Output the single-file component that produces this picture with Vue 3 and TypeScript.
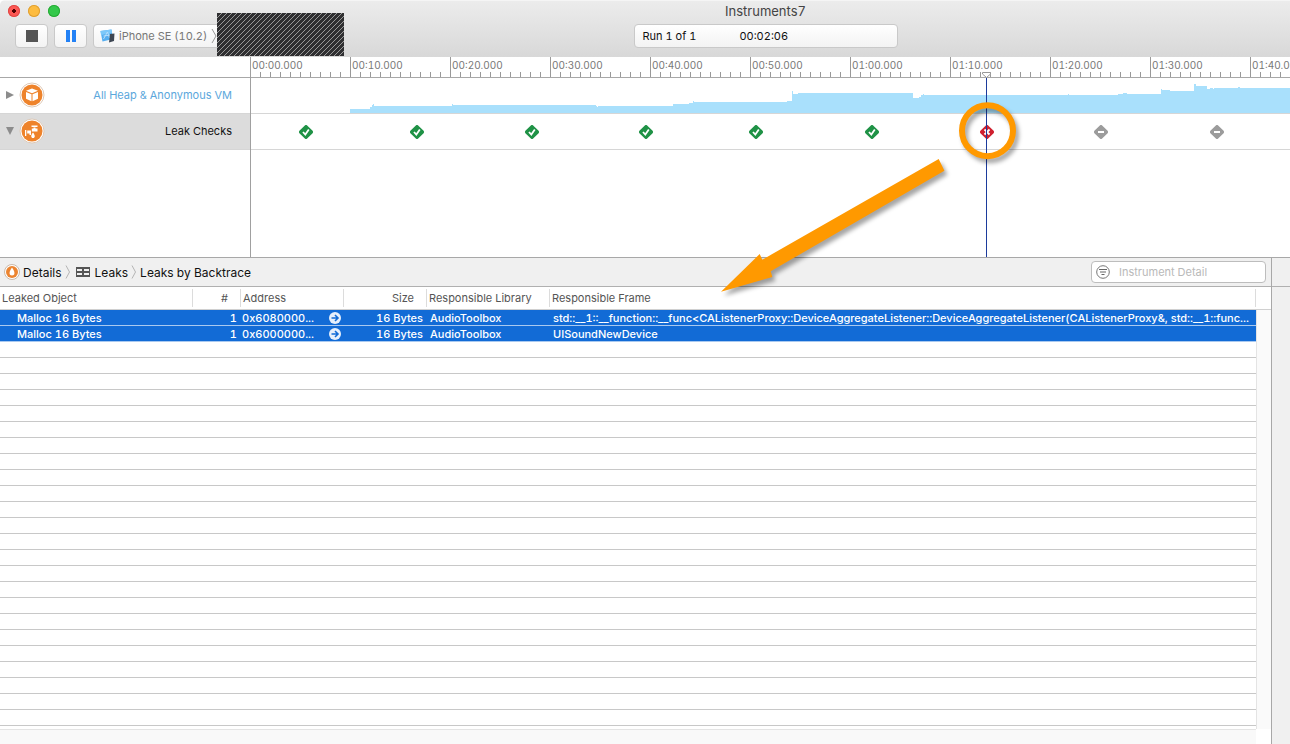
<script setup lang="ts">
type Status = 'ok' | 'leak' | 'none'

const labels = Array.from({ length: 11 }, (_, i) => {
  const s = i * 10
  const pad = (n: number) => String(n).padStart(2, '0')
  return `${pad(Math.floor(s / 60))}:${pad(s % 60)}.000`
})

const colors: Record<Status, string> = {
  ok: '#1f9246',
  leak: '#cf202f',
  none: '#9c9c9c',
}

const checks: { x: number; status: Status }[] = [
  { x: 55, status: 'ok' },
  { x: 166, status: 'ok' },
  { x: 281, status: 'ok' },
  { x: 395, status: 'ok' },
  { x: 505, status: 'ok' },
  { x: 621, status: 'ok' },
  { x: 736, status: 'leak' },
  { x: 850, status: 'none' },
  { x: 966, status: 'none' },
]

const leaks = [
  {
    object: 'Malloc 16 Bytes',
    count: 1,
    address: '0x6080000...',
    size: '16 Bytes',
    library: 'AudioToolbox',
    frame:
      'std::__1::__function::__func<CAListenerProxy::DeviceAggregateListener::DeviceAggregateListener(CAListenerProxy&, std::__1::func...',
  },
  {
    object: 'Malloc 16 Bytes',
    count: 1,
    address: '0x6000000...',
    size: '16 Bytes',
    library: 'AudioToolbox',
    frame: 'UISoundNewDevice',
  },
]
</script>

<template>
  <div class="window">
    <header class="toolbar">
      <div class="lights">
        <button class="light close" aria-label="Close"></button>
        <button class="light minimize" aria-label="Minimize"></button>
        <button class="light zoom" aria-label="Zoom"></button>
      </div>
      <h1 class="title">Instruments7</h1>
      <div class="controls">
        <button class="tool" aria-label="Stop">
          <svg width="12" height="12"><rect width="12" height="12" fill="#555" /></svg>
        </button>
        <button class="tool" aria-label="Pause">
          <svg width="10" height="12">
            <rect width="4" height="12" fill="#2381f5" />
            <rect x="6" width="4" height="12" fill="#2381f5" />
          </svg>
        </button>
        <button class="target">
          <svg width="15" height="14" viewBox="0 0 15 14">
            <path d="M0.5 2 L11.5 0.5 L13 10 L2.5 12.5 Z" fill="#55aef0" />
            <path d="M0.5 2 L11.500 0.500 L12 4 L1 6 Z" fill="#7cc8fa" />
            <path d="M3.500 10 L7.500 3 L9.500 9 M3.500 7 L10.500 6" stroke="#b5defc" fill="none" />
            <path d="M10 5 L14.500 4.500 L14 12 L9 13.500 Z" fill="#3d4652" />
          </svg>
          <span>iPhone SE (10.2)</span>
          <svg width="6" height="16" viewBox="0 0 6 16">
            <path d="M1 1 L5 8 L1 15" fill="none" stroke="#999" />
          </svg>
        </button>
      </div>
      <div class="run">
        <span>Run 1 of 1</span>
        <time>00:02:06</time>
      </div>
      <svg class="redacted" width="127" height="43">
        <defs>
          <pattern id="hatch" width="5" height="5" patternUnits="userSpaceOnUse">
            <rect width="5" height="5" fill="#2f2f31" />
            <path d="M0 4h1v1h-1z M1 3h1v1h-1z M2 2h1v1h-1z M3 1h1v1h-1z M4 0h1v1h-1z" fill="#9a9a9a" />
          </pattern>
        </defs>
        <rect width="127" height="43" fill="url(#hatch)" />
      </svg>
    </header>

    <section class="timeline">
      <div class="tracks">
        <div class="corner"></div>
        <div class="track-head">
          <svg class="arrow" width="8" height="10"><path d="M0 1 L8 5 L0 9 Z" fill="#8c8c8c" /></svg>
          <svg class="badge" width="26" height="26" viewBox="0 0 26 26">
            <circle cx="13" cy="13" r="12" fill="#fff" stroke="#ddc9b8" />
            <circle cx="13" cy="13" r="10.5" fill="#ee832b" />
            <path d="M13 6.5 L19 8.8 L13 11.2 L7 8.8 Z" fill="#fff" />
            <path d="M7 10 L12.5 12.2 V19.3 L7 16.8 Z" fill="#fff" />
            <path d="M19 10 L13.5 12.2 V19.3 L19 16.8 Z" fill="#fff" />
          </svg>
          <span class="heap-name">All Heap &amp; Anonymous VM</span>
        </div>
        <div class="track-head selected">
          <svg class="arrow" width="8" height="8"><path d="M0 0 H8 L4 8 Z" fill="#8c8c8c" /></svg>
          <svg class="badge" width="26" height="26" viewBox="0 0 26 26">
            <circle cx="13" cy="13" r="12" fill="#fff" stroke="#ddc9b8" />
            <circle cx="13" cy="13" r="10.5" fill="#ee832b" />
            <path d="M6 12 H7.3 V18 H6 Z M8.2 12.5 H12 V17 H10.5 V15.5 H8.2 Z" fill="#fff" />
            <path d="M12.5 7.5 H18.5 V9 H12.5 Z M14.500 9.500 H16.500 V10.500 H18.500 V13.500 H12.800 V10.500 H14.500 Z" fill="#fff" />
            <path d="M14 14.5 C16.500 17.500 16.200 20 14 20 C11.800 20 11.500 17.500 14 14.500 Z" fill="#fff" />
          </svg>
          <span>Leak Checks</span>
        </div>
      </div>

      <div class="lanes">
        <div class="ruler">
          <span v-for="label in labels" :key="label" class="mark">{{ label }}</span>
        </div>
        <div class="lane">
          <svg class="graph" width="3000" height="35" shape-rendering="crispEdges">
            <path
              d="M99 35 V31 H119 V29 H121 V27 H122 V26 H123 V28 H124 V28 H201 V26 H202 V27 H344 L347 29 V28 H422 V26 H438 V25 H442 V23 H443 V24 H536 V23 H541 V13 H542 V16 H547 V15 H662 V20 H668 V19 H670 V17 H672 V16 H673 V17 H817 V16 H818 V17 H867 V16 H872 V15 H876 V16 H910 V11 H911 V12 H919 V13 H943 V6 H945 V8 H956 V11 H959 V10 H962 V11 H963 V10 H987 V9 H989 V10 H3000 V35 Z"
              fill="#a9e0fc"
            />
          </svg>
        </div>
        <div class="lane">
          <svg
            v-for="check in checks"
            :key="check.x"
            class="check"
            :style="{ left: check.x + 'px' }"
            width="14"
            height="14"
            viewBox="0 0 14 14"
          >
            <rect
              x="1.5"
              y="1.5"
              width="11"
              height="11"
              rx="2"
              transform="rotate(45 7 7)"
              :fill="colors[check.status]"
            />
            <path
              v-if="check.status === 'ok'"
              d="M4 7 L6.300 9.500 L9.800 4.500"
              fill="none"
              stroke="#fff"
              stroke-width="1.8"
            />
            <path
              v-else-if="check.status === 'leak'"
              d="M4.500 4.500 L9.500 9.500 M9.500 4.500 L4.500 9.500"
              stroke="#fff"
              stroke-width="1.8"
            />
            <path v-else d="M4 7 H10" stroke="#fff" stroke-width="2" />
          </svg>
        </div>
        <div class="playhead">
          <svg width="9" height="6" viewBox="0 0 9 6">
            <path d="M0.5 0.5 H8.5 V2 L4.5 5.5 L0.5 2 Z" fill="#fff" stroke="#999" />
          </svg>
        </div>
        <svg class="annotation" width="320" height="210" viewBox="0 0 320 210">
          <circle cx="277.5" cy="39.700" r="25.5" fill="none" stroke="#f90" stroke-width="6" />
          <path
            d="M228.700 68 L234.400 79.700 L60.700 180.300 L62.300 186 L11 200.700 L49.700 163 L52.300 168.700 Z"
            fill="#f90"
          />
        </svg>
      </div>
    </section>

    <section class="details">
      <div class="panel">
        <div class="pathbar">
          <nav class="crumbs">
            <a href="#details">
              <svg width="16" height="16" viewBox="0 0 16 16">
                <circle cx="8" cy="8" r="7.5" fill="#fff" stroke="#c9b9aa" />
                <circle cx="8" cy="8" r="6" fill="#ec8430" />
                <path d="M8 3.500 C11.500 8 11 11.500 8 11.500 C5 11.500 4.500 8 8 3.500 Z" fill="#fff" />
              </svg>
              Details
            </a>
            <svg class="sep" width="6" height="14" viewBox="0 0 6 14">
              <path d="M1 0.500 L4.500 7 L1 13.500" fill="none" stroke="#b4b4b4" />
            </svg>
            <a class="group" href="#leaks">
              <svg width="14" height="10" viewBox="0 0 14 10">
                <rect width="14" height="10" fill="#555" />
                <path d="M1 2H6V4H1Z M8 2H13V4H8Z M1 6H6V8H1Z M8 6H13V8H8Z" fill="#f0f0f0" />
              </svg>
              Leaks
            </a>
            <svg width="6" height="14" viewBox="0 0 6 14">
              <path d="M1 0.500 L4.500 7 L1 13.500" fill="none" stroke="#b4b4b4" />
            </svg>
            <a href="#backtrace">Leaks by Backtrace</a>
          </nav>
          <label class="search">
            <svg width="14" height="14" viewBox="0 0 14 14">
              <circle cx="7" cy="7" r="6.300" fill="none" stroke="#777" />
              <path d="M3 4.500H11 M4 7H10 M5.500 9.500H8.500" fill="none" stroke="#666" />
            </svg>
            <input type="text" placeholder="Instrument Detail" aria-label="Instrument Detail" />
          </label>
        </div>

        <div class="filled">
          <table>
            <colgroup>
              <col class="c-object" />
              <col class="c-count" />
              <col class="c-address" />
              <col class="c-size" />
              <col class="c-library" />
              <col />
            </colgroup>
            <thead>
              <tr>
                <th><span>Leaked Object</span></th>
                <th class="num"><span>#</span></th>
                <th><span>Address</span></th>
                <th class="num"><span>Size</span></th>
                <th><span>Responsible Library</span></th>
                <th><span>Responsible Frame</span></th>
              </tr>
            </thead>
            <tbody>
              <tr v-for="leak in leaks" :key="leak.address">
                <td class="object">{{ leak.object }}</td>
                <td class="num">{{ leak.count }}</td>
                <td class="address-cell">
                  <div class="address">
                    {{ leak.address }}
                    <button class="go" aria-label="Show address">
                      <svg width="12" height="12" viewBox="0 0 12 12">
                        <circle cx="6" cy="6" r="6" fill="#e6effb" />
                        <path d="M2.500 6H8 M6 3L9 6L6 9" fill="none" stroke="#126bd6" stroke-width="1.600" />
                      </svg>
                    </button>
                  </div>
                </td>
                <td class="num">{{ leak.size }}</td>
                <td>{{ leak.library }}</td>
                <td>{{ leak.frame }}</td>
              </tr>
            </tbody>
          </table>
          <div class="gutter">
            <div class="gutter-head"></div>
            <div class="vscroll"></div>
          </div>
        </div>
        <div class="empty">
          <div class="stripes"></div>
          <div class="vscroll"></div>
        </div>
        <div class="hscroll"></div>
      </div>
      <aside class="inspector"><div class="inspector-top"></div></aside>
    </section>
  </div>
</template>

<style>
body {
  margin: 0;
  background: #fff;
}
</style>

<style scoped>
.window {
  display: flex;
  flex-direction: column;
  min-height: 100vh;
  overflow: hidden;
  font-family: Inter, "Liberation Sans", sans-serif;
  font-size: 11px;
  font-variant-numeric: tabular-nums;
  color: #111;
  border-top-left-radius: 5px;
}
button {
  font: inherit;
  padding: 0;
  border: 0;
}
.toolbar {
  position: relative;
  display: grid;
  grid-template-rows: 23px 24px;
  box-sizing: border-box;
  height: 57px;
  background: linear-gradient(#ececec, #d8d8d8);
  border-top: 1px solid #f5f5f5;
}
.lights {
  grid-area: 1 / 1;
  display: flex;
  align-items: center;
  gap: 8px;
  padding-left: 8px;
  height: 20px;
}
.light {
  width: 12px;
  height: 12px;
  border-radius: 50%;
}
.close {
  background: radial-gradient(circle, #4d0000 0 2px, #fc5753 2px);
  box-shadow: inset 0 0 0 1px #df4744;
}
.minimize {
  background: #fdbc40;
  box-shadow: inset 0 0 0 1px #de9f34;
}
.zoom {
  background: #34c84a;
  box-shadow: inset 0 0 0 1px #27aa35;
}
.title {
  grid-area: 1 / 1;
  margin: 0;
  padding-left: 241px;
  font-size: 13px;
  font-weight: 400;
  line-height: 20px;
  text-align: center;
  color: #444;
}
.controls {
  grid-area: 2 / 1;
  display: flex;
  gap: 6px;
  padding-left: 15px;
}
.tool,
.target,
.run {
  box-sizing: border-box;
  height: 24px;
  background: linear-gradient(#fff, #f3f3f3);
  border: 1px solid #c9c9c9;
  border-radius: 4px;
}
.tool {
  display: flex;
  align-items: center;
  justify-content: center;
  width: 33px;
}
.target {
  display: flex;
  align-items: center;
  gap: 4px;
  width: 130px;
  padding-left: 6px;
  color: #777;
}
.target span {
  white-space: nowrap;
}
.run {
  grid-area: 2 / 1;
  justify-self: center;
  display: flex;
  align-items: center;
  gap: 43px;
  width: 264px;
  margin-left: 241px;
  padding-left: 8px;
}
.redacted {
  position: absolute;
  left: 217px;
  top: 12px;
}
.timeline {
  display: flex;
  height: 200px;
  border-bottom: 1px solid #a8a8a8;
}
.tracks {
  flex: 0 0 250px;
  border-right: 1px solid #a0a0a0;
}
.corner,
.ruler {
  box-sizing: border-box;
  height: 21px;
  border-bottom: 1px solid #a8a8a8;
}
.track-head,
.lane {
  position: relative;
  box-sizing: border-box;
  height: 36px;
  border-bottom: 1px solid #d6d6d6;
}
.track-head {
  display: flex;
  align-items: center;
  padding: 0 18px 1px 6px;
}
.track-head.selected {
  background: #dcdcdc;
}
.arrow {
  width: 8px;
  margin-right: 5px;
}
.track-head span {
  margin-left: auto;
}
.track-head .heap-name {
  color: #5ba7dc;
}
.lanes {
  position: relative;
  flex: 1;
  min-width: 0;
}
.ruler {
  display: flex;
  overflow: hidden;
  background: repeating-linear-gradient(90deg, transparent 0 9px, #999 9px 10px) bottom / 100% 5px no-repeat;
}
.mark {
  box-sizing: border-box;
  flex: 0 0 100px;
  padding-left: 1px;
  border-right: 1px solid #999;
  font-size: 10px;
  line-height: 17px;
  color: #777;
}
.lane {
  overflow: hidden;
}
.graph {
  display: block;
}
.check {
  position: absolute;
  top: 11px;
  margin-left: -7px;
}
.playhead {
  position: absolute;
  left: 735px;
  top: 21px;
  bottom: 0;
  width: 1px;
  background: #1c3b9c;
}
.playhead svg {
  position: absolute;
  left: -4px;
  top: -6px;
}
.annotation {
  position: absolute;
  left: 459px;
  top: 34px;
  z-index: 2;
  pointer-events: none;
  filter: drop-shadow(3px 4px 2px rgba(0, 0, 0, 0.35));
}
.details {
  flex: 1;
  display: flex;
  min-height: 0;
}
.panel {
  flex: 1;
  min-width: 0;
  display: flex;
  flex-direction: column;
  border-right: 1px solid #a8a8a8;
}
.pathbar {
  display: flex;
  align-items: center;
  justify-content: space-between;
  box-sizing: border-box;
  height: 29px;
  padding: 0 5px 0 4px;
  background: #f0f0f0;
  border-bottom: 1px solid #b0b0b0;
}
.crumbs,
.crumbs a {
  display: flex;
  align-items: center;
  gap: 3px;
}
.crumbs a {
  font-size: 12px;
  color: #111;
  text-decoration: none;
}
.crumbs .group {
  gap: 5px;
}
.sep {
  margin-right: 2px;
}
.search {
  display: flex;
  align-items: center;
  gap: 9px;
  box-sizing: border-box;
  width: 175px;
  height: 22px;
  padding: 0 4px;
  background: #fff;
  border: 1px solid #bdbdbd;
  border-radius: 4px;
}
.search input {
  flex: 1;
  min-width: 0;
  padding: 0;
  border: 0;
  outline: 0;
  font: inherit;
}
.search input::placeholder {
  color: #b9b9b9;
}
.filled {
  display: flex;
}
table {
  flex: 1;
  width: 0;
  min-width: 0;
  table-layout: fixed;
  border-collapse: separate;
  border-spacing: 0;
}
.gutter {
  flex: 0 0 15px;
  display: flex;
  flex-direction: column;
}
.gutter-head {
  box-sizing: border-box;
  height: 23px;
  border-bottom: 1px solid #d0d0d0;
}
.gutter .vscroll {
  flex: 1;
}
.c-object {
  width: 193px;
}
.c-count {
  width: 48px;
}
.c-address {
  width: 103px;
}
.c-size {
  width: 83px;
}
.c-library {
  width: 123px;
}
th {
  height: 23px;
  padding: 2px 0;
  box-sizing: border-box;
  border-bottom: 1px solid #d0d0d0;
  font-weight: 400;
  text-align: left;
  color: #555;
}
th span {
  display: block;
  padding: 0 2px;
  border-right: 1px solid #dcdcdc;
  line-height: 18px;
}
th.num span {
  padding-right: 12px;
}
.num {
  text-align: right;
}
td {
  height: 16px;
  box-sizing: border-box;
  padding: 1px 3px 0;
  border-bottom: 1px solid #a9c9f0;
  background: #126bd6;
  color: #fff;
  font-weight: 500;
  line-height: 14px;
  white-space: nowrap;
}
td.num {
  padding-right: 4px;
}
td.object {
  padding-left: 17px;
}
td.address-cell {
  padding-left: 1px;
}
.address {
  display: flex;
  align-items: center;
  justify-content: space-between;
}
.go {
  display: flex;
  background: none;
}
.empty {
  flex: 1;
  display: flex;
}
.stripes {
  flex: 1;
  background: repeating-linear-gradient(#fff 0 15px, #c8c8c8 15px 16px);
}
.vscroll {
  width: 15px;
  box-sizing: border-box;
  background: #fafafa;
  border-left: 1px solid #e4e4e4;
}
.hscroll {
  height: 15px;
  box-sizing: border-box;
  margin-right: 15px;
  background: #f9f9f9;
  border-top: 1px solid #e4e4e4;
}
.inspector {
  flex: 0 0 18px;
  background: #f0f0f0;
}
.inspector-top {
  box-sizing: border-box;
  height: 29px;
  border-bottom: 1px solid #b0b0b0;
}
</style>
